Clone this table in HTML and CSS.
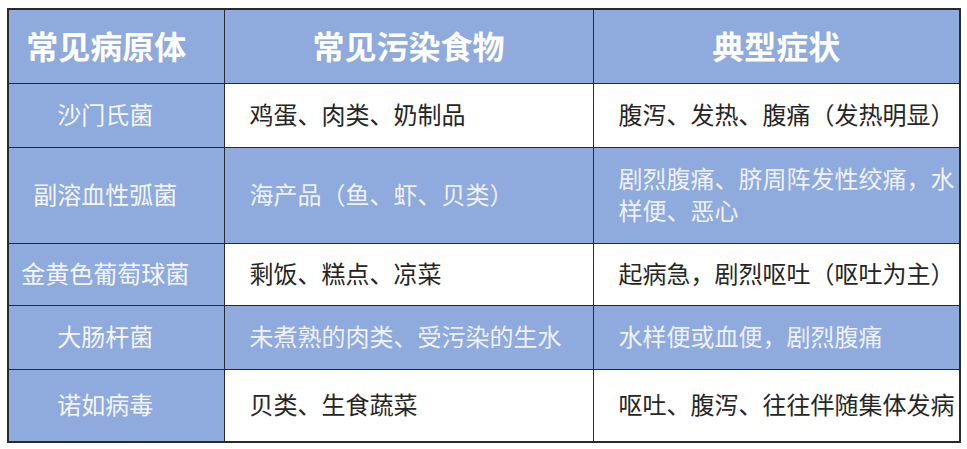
FILE: index.html
```html
<!DOCTYPE html>
<html lang="zh-CN">
<head>
<meta charset="utf-8">
<title>常见病原体</title>
<link rel="stylesheet" href="styles.css">
</head>
<body>
<div class="page">
  <table class="grid">
    <colgroup>
      <col class="c1"><col class="c2"><col class="c3">
    </colgroup>
    <thead>
      <tr class="head">
        <th class="h1">常见病原体</th>
        <th>常见污染食物</th>
        <th>典型症状</th>
      </tr>
    </thead>
    <tbody>
      <tr class="r1 light">
        <td class="name">沙门氏菌</td>
        <td class="food">鸡蛋、肉类、奶制品</td>
        <td class="sym">腹泻、发热、腹痛（发热明显）</td>
      </tr>
      <tr class="r2 blue">
        <td class="name">副溶血性弧菌</td>
        <td class="food">海产品（鱼、虾、贝类）</td>
        <td class="sym">剧烈腹痛、脐周阵发性绞痛，水样便、恶心</td>
      </tr>
      <tr class="r3 light">
        <td class="name">金黄色葡萄球菌</td>
        <td class="food">剩饭、糕点、凉菜</td>
        <td class="sym">起病急，剧烈呕吐（呕吐为主）</td>
      </tr>
      <tr class="r4 blue">
        <td class="name">大肠杆菌</td>
        <td class="food">未煮熟的肉类、受污染的生水</td>
        <td class="sym">水样便或血便，剧烈腹痛</td>
      </tr>
      <tr class="r5 light">
        <td class="name">诺如病毒</td>
        <td class="food">贝类、生食蔬菜</td>
        <td class="sym">呕吐、腹泻、往往伴随集体发病</td>
      </tr>
    </tbody>
  </table>
  <div class="strip"></div>
</div>
</body>
</html>
```

FILE: styles.css
```css
html, body {
  margin: 0;
  padding: 0;
  background: #ffffff;
}
.page {
  width: 967px;
  height: 449px;
  padding-top: 8px;
  box-sizing: border-box;
  overflow: hidden;
}
.grid {
  margin-left: 7px;
  width: 952px;
  border-collapse: collapse;
  table-layout: fixed;
  border: 2px solid #2a2a2a;
  font-family: "Noto Sans CJK SC", "Noto Sans", sans-serif;
}
.c1 { width: 216px; }
.c2 { width: 369px; }
.c3 { width: 367px; }
.grid th, .grid td {
  border: 1px solid #2a2a2a;
  padding: 0 0 3px 0;
  vertical-align: middle;
  box-sizing: border-box;
}
.head th {
  background: #8faadc;
  color: #ffffff;
  font-size: 32px;
  font-weight: 700;
  text-align: center;
  height: 74px;
}
.head .h1 {
  padding-right: 20px;
}
.r1 { height: 64px; }
.r2 { height: 96px; }
.r3 { height: 62px; }
.r4 { height: 64px; }
.r5 { height: 73px; }
.grid td {
  font-size: 24px;
  line-height: 32px;
  font-weight: 400;
}
.grid td.name {
  background: #8faadc;
  color: #f4f6fb;
  text-align: center;
  padding-right: 22px;
  white-space: nowrap;
}
.grid td.food {
  padding-left: 25px;
  text-align: left;
}
.grid td.sym {
  padding-left: 25px;
  padding-right: 0;
  text-align: left;
}
.light td.food, .light td.sym {
  background: #ffffff;
  color: #262626;
}
.blue td.food, .blue td.sym {
  background: #8faadc;
  color: #eef1f8;
}
.strip {
  margin-top: 6px;
  height: 3px;
  background: #d2d2d2;
}
```
